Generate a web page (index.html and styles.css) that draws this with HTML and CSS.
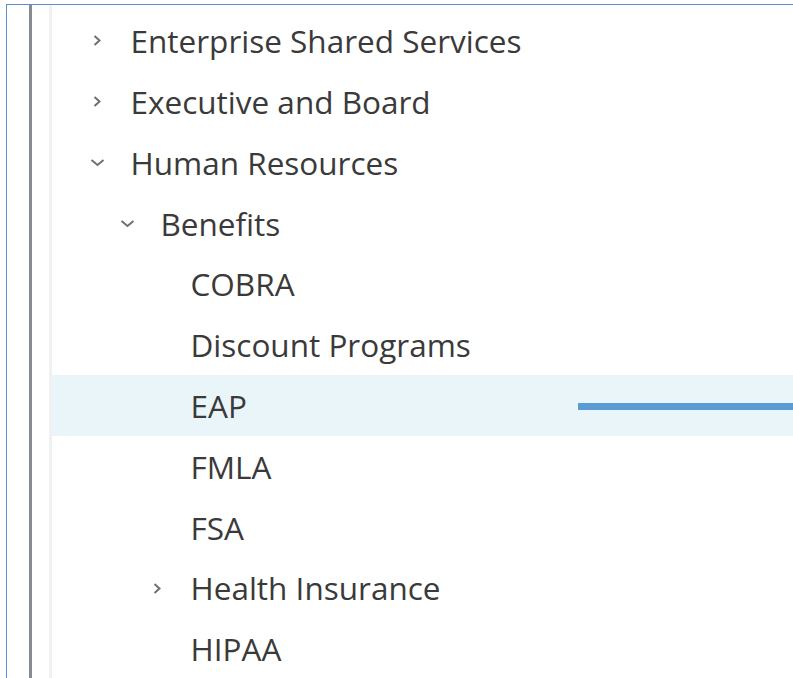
FILE: index.html
```html
<!DOCTYPE html>
<html lang="en">
<head>
<meta charset="utf-8">
<title>Site Tree</title>
<link rel="stylesheet" href="styles.css">
</head>
<body>
<div class="frame">
  <div class="rail">
    <div class="pane">
      <ul class="tree">
        <li class="node lvl-0">
          <span class="toggle"><svg width="10" height="13" viewBox="0 0 10 13"><path d="M2.5 2 L7.5 6.5 L2.5 11" fill="none" stroke="#707070" stroke-width="2"/></svg></span>
          <span class="label">Enterprise Shared Services</span>
        </li>
        <li class="node lvl-0">
          <span class="toggle"><svg width="10" height="13" viewBox="0 0 10 13"><path d="M2.5 2 L7.5 6.5 L2.5 11" fill="none" stroke="#707070" stroke-width="2"/></svg></span>
          <span class="label">Executive and Board</span>
        </li>
        <li class="node lvl-0">
          <span class="toggle"><svg class="down" width="15" height="9" viewBox="0 0 15 9"><path d="M1.5 2 L7.5 7 L13.5 2" fill="none" stroke="#707070" stroke-width="2"/></svg></span>
          <span class="label">Human Resources</span>
        </li>
        <li class="node lvl-1">
          <span class="toggle"><svg class="down" width="15" height="9" viewBox="0 0 15 9"><path d="M1.5 2 L7.5 7 L13.5 2" fill="none" stroke="#707070" stroke-width="2"/></svg></span>
          <span class="label">Benefits</span>
        </li>
        <li class="node lvl-2"><span class="toggle"></span><span class="label">COBRA</span></li>
        <li class="node lvl-2"><span class="toggle"></span><span class="label">Discount Programs</span></li>
        <li class="node lvl-2 selected">
          <span class="toggle"></span><span class="label">EAP</span>
          <span class="marker"></span>
        </li>
        <li class="node lvl-2"><span class="toggle"></span><span class="label">FMLA</span></li>
        <li class="node lvl-2"><span class="toggle"></span><span class="label">FSA</span></li>
        <li class="node lvl-2">
          <span class="toggle"><svg width="10" height="13" viewBox="0 0 10 13"><path d="M2.5 2 L7.5 6.5 L2.5 11" fill="none" stroke="#707070" stroke-width="2"/></svg></span>
          <span class="label">Health Insurance</span>
        </li>
        <li class="node lvl-2"><span class="toggle"></span><span class="label">HIPAA</span></li>
      </ul>
    </div>
  </div>
</div>
</body>
</html>
```
FILE: styles.css
```css
html, body {
  margin: 0;
  padding: 0;
  background: #ffffff;
  overflow: hidden;
}

body {
  height: 678px;
  font-family: "Open Sans", "Noto Sans", sans-serif;
  color: #3a3a3a;
}

/* outer panel outline */
.frame {
  margin: 4px 0 0 6px;
  height: 674px;
  border-top: 1.5px solid #5b8fd0;
  border-left: 1.5px solid #5b8fd0;
  box-sizing: border-box;
  padding-left: 21.5px;
}

/* dark guide rail */
.rail {
  height: 100%;
  border-left: 3px solid #878c94;
  padding-left: 17px;
}

/* light inner edge */
.pane {
  height: 100%;
  border-left: 3px solid #f1f1f1;
}

.tree {
  list-style: none;
  margin: 0;
  padding: 5.6px 0 0 0;
}

.node {
  display: flex;
  align-items: center;
  height: 60.8px;
  box-sizing: border-box;
  position: relative;
}

.lvl-0 { padding-left: 30px; }
.lvl-1 { padding-left: 60px; }
.lvl-2 { padding-left: 90px; }

.toggle {
  width: 30px;
  margin-right: 19px;
  display: flex;
  justify-content: center;
  align-items: center;
  flex: none;
}

.toggle svg { display: block; }
.toggle .down { margin-left: 2px; }

.label {
  font-size: 31.5px;
  letter-spacing: 0;
  white-space: nowrap;
  line-height: 1;
}

.selected {
  background: #eaf5fa;
}

/* selection marker drawn across the row */
.marker {
  position: absolute;
  left: 526px;
  right: 0;
  top: 28px;
  height: 7px;
  background: #5b9bd5;
}
```
